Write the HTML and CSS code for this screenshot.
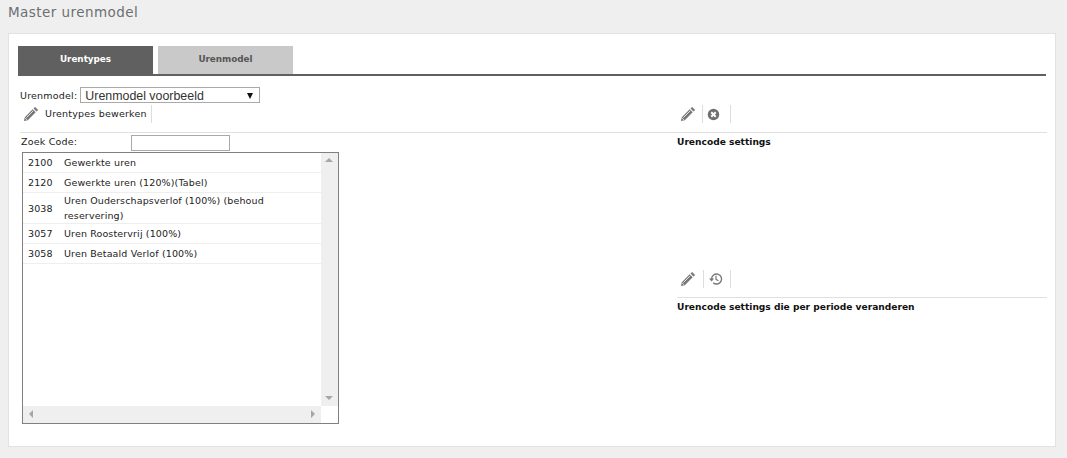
FILE: index.html
```html
<!DOCTYPE html>
<html lang="nl">
<head>
<meta charset="utf-8">
<title>Master urenmodel</title>
<link rel="stylesheet" href="styles.css">
</head>
<body>
<svg class="defs" width="0" height="0" aria-hidden="true">
  <symbol id="pencil" viewBox="0 0 16 16">
    <path d="M12.1.9l3 3-1.6 1.6-3-3zM9.7 3.3l3 3-7.9 7.9-3.9.9.9-3.9z"/>
    <path d="M3.4 11.6l6.9-6.9" stroke="#fff" stroke-width=".8" fill="none"/>
    <path d="M2 11.9l2.1 2.1" stroke="#fff" stroke-width=".7" fill="none"/>
  </symbol>
</svg>
<h1 class="title">Master urenmodel</h1>
<main class="card">
  <nav class="tabs">
    <div class="tab tab-active">Urentypes</div>
    <div class="tab">Urenmodel</div>
  </nav>
  <div class="columns">
    <section class="left">
      <div class="model-row">
        <label class="label">Urenmodel:</label>
        <div class="select"><span>Urenmodel voorbeeld</span><span class="select-arrow"></span></div>
      </div>
      <div class="toolbar toolbar-left">
        <span class="tool tool-pencil"><svg class="icon"><use href="#pencil"/></svg></span>
        <span class="tool-text">Urentypes bewerken</span>
      </div>
      <div class="search-row">
        <label class="label search-label">Zoek Code:</label>
        <div class="search-input"></div>
      </div>
      <div class="list">
        <div class="list-body">
          <div class="rows">
            <div class="row"><span class="code">2100</span><span class="desc">Gewerkte uren</span></div>
            <div class="row"><span class="code">2120</span><span class="desc">Gewerkte uren (120%)(Tabel)</span></div>
            <div class="row"><span class="code">3038</span><span class="desc">Uren Ouderschapsverlof (100%) (behoud reservering)</span></div>
            <div class="row"><span class="code">3057</span><span class="desc">Uren Roostervrij (100%)</span></div>
            <div class="row"><span class="code">3058</span><span class="desc">Uren Betaald Verlof (100%)</span></div>
          </div>
          <div class="vbar"><span class="arrow arrow-up"></span><span class="arrow arrow-down"></span></div>
        </div>
        <div class="hrow">
          <div class="hbar"><span class="arrow arrow-left"></span><span class="arrow arrow-right"></span></div>
          <div class="corner"></div>
        </div>
      </div>
    </section>
    <section class="right">
      <div class="panel panel-top">
        <div class="toolbar">
          <span class="tool"><svg class="icon"><use href="#pencil"/></svg></span>
          <span class="tool">
            <svg class="icon-small" viewBox="0 0 14 14"><circle cx="7" cy="7" r="6.2"/><path d="M4.6 4.6l4.8 4.8M9.4 4.6l-4.8 4.8" stroke="#fff" stroke-width="2.1" fill="none"/></svg>
          </span>
        </div>
        <div class="panel-title">Urencode settings</div>
      </div>
      <div class="panel">
        <div class="toolbar">
          <span class="tool tool-second"><svg class="icon"><use href="#pencil"/></svg></span>
          <span class="tool tool-history">
            <svg class="icon-history" viewBox="0 0 14 14"><path d="M2.6 7a5 5 0 1 1 1.6 3.7" fill="none" stroke="#777" stroke-width="1.4"/><path d="M0 6.4h5.1L2.6 9.4z"/><path d="M7 3.8v3.5l2.4 1.4" fill="none" stroke="#777" stroke-width="1.2"/></svg>
          </span>
        </div>
        <div class="panel-title panel-title-second">Urencode settings die per periode veranderen</div>
      </div>
    </section>
  </div>
</main>
</body>
</html>
```

FILE: styles.css
```css
* { box-sizing: border-box; }
html, body { margin: 0; padding: 0; }
body {
  width: 1067px;
  height: 458px;
  background: #efefef;
  font-family: "DejaVu Sans", Verdana, sans-serif;
  font-size: 9.5px;
  color: #222;
  overflow: hidden;
}
.defs { position: absolute; }
.title {
  margin: 0;
  padding: 4px 0 0 8px;
  height: 33px;
  font-size: 13.5px;
  line-height: 16px;
  font-weight: 400;
  letter-spacing: 0.45px;
  color: #6c6f72;
}
.card {
  margin-left: 8px;
  width: 1048px;
  height: 414px;
  background: #fff;
  border: 1px solid #e2e2e2;
  padding: 12px 9px 0 9px;
}
.tabs {
  display: flex;
  gap: 5px;
  height: 30px;
  border-bottom: 2px solid #606060;
}
.tab {
  width: 135px;
  height: 28px;
  background: #c9c9c9;
  color: #555;
  font-weight: 700;
  font-size: 8.8px;
  line-height: 27px;
  text-align: center;
}
.tab-active { height: 30px; background: #606060; color: #fff; }
.columns { display: flex; }
.left { width: 659px; flex: none; }
.right { flex: 1; margin-right: -1px; }
.model-row {
  display: flex;
  align-items: center;
  height: 18px;
  margin: 10px 0 0 2px;
  gap: 3px;
}
.label { color: #222; letter-spacing: 0.2px; }
.select {
  width: 180px;
  height: 16px;
  border: 1px solid #a9a9a9;
  display: flex;
  align-items: center;
  justify-content: space-between;
  padding: 1px 6px 0 4px;
  font-family: "Liberation Sans", Arial, sans-serif;
  font-size: 12.4px;
  color: #333;
}
.select-arrow {
  width: 0;
  height: 0;
  border-left: 3.5px solid transparent;
  border-right: 3.5px solid transparent;
  border-top: 6px solid #111;
}
.toolbar {
  display: flex;
  align-items: center;
  height: 18px;
}
.toolbar-left {
  height: 29px;
  padding: 0 0 8px 2px;
  margin-left: 2px;
  border-bottom: 1px solid #e0e0e0;
}
.tool {
  display: flex;
  align-items: center;
  height: 18px;
  padding: 0 6px 0 0;
  border-right: 1px solid #ddd;
}
.tool + .tool { padding: 0 10px 0 4px; }
.tool-pencil { border-right: 0; padding: 0 6px 0 1px; }
.tool-second { padding: 0 7px 0 0; }
.tool + .tool-history { padding: 0 7px 0 5px; }
.tool-text {
  height: 18px;
  line-height: 18px;
  padding-right: 4px;
  border-right: 1px solid #ddd;
  letter-spacing: 0.2px;
}
.icon { width: 16px; height: 16px; fill: #777; }
.icon-small { width: 13px; height: 13px; fill: #707070; }
.icon-history { width: 14px; height: 14px; fill: #777; }
.search-row {
  display: flex;
  align-items: center;
  height: 16px;
  margin: 2px 0 0 3px;
}
.search-label { width: 110px; line-height: 14px; align-self: flex-start; }
.search-input {
  width: 99px;
  height: 16px;
  border: 1px solid #a9a9a9;
  background: #fff;
}
.list {
  width: 317px;
  height: 272px;
  margin: 1px 0 0 4px;
  border: 1px solid #808080;
  display: flex;
  flex-direction: column;
}
.list-body { flex: 1; display: flex; min-height: 0; }
.rows { flex: 1; }
.row {
  display: flex;
  align-items: center;
  min-height: 20px;
  padding: 0 18px 0 5px;
  border-bottom: 1px solid #eee;
  line-height: 15px;
  color: #222;
  letter-spacing: 0.13px;
}
.code { width: 36px; flex: none; }
.desc { flex: 1; }
.vbar {
  position: relative;
  width: 17px;
  background: #efefef;
}
.hrow { display: flex; height: 17px; }
.hbar { position: relative; flex: 1; background: #efefef; }
.corner { width: 17px; background: #fff; }
.arrow { position: absolute; width: 0; height: 0; border: 4px solid transparent; }
.arrow-up { top: 5px; left: 4px; border-top: 0; border-bottom: 4px solid #a6a6a6; }
.arrow-down { bottom: 6px; left: 4px; border-bottom: 0; border-top: 4px solid #a6a6a6; }
.arrow-left { left: 6px; top: 4px; border-left: 0; border-right: 4px solid #a6a6a6; }
.arrow-right { right: 6px; top: 4px; border-right: 0; border-left: 4px solid #a6a6a6; }
.panel-top { height: 194px; padding-top: 29px; }
.panel .toolbar { padding-left: 3px; }
.panel-title {
  font-weight: 700;
  font-size: 9.1px;
  color: #111;
  line-height: 14px;
  border-top: 1px solid #e0e0e0;
  margin-top: 9px;
  padding: 2px 0 0 0;
}
```
